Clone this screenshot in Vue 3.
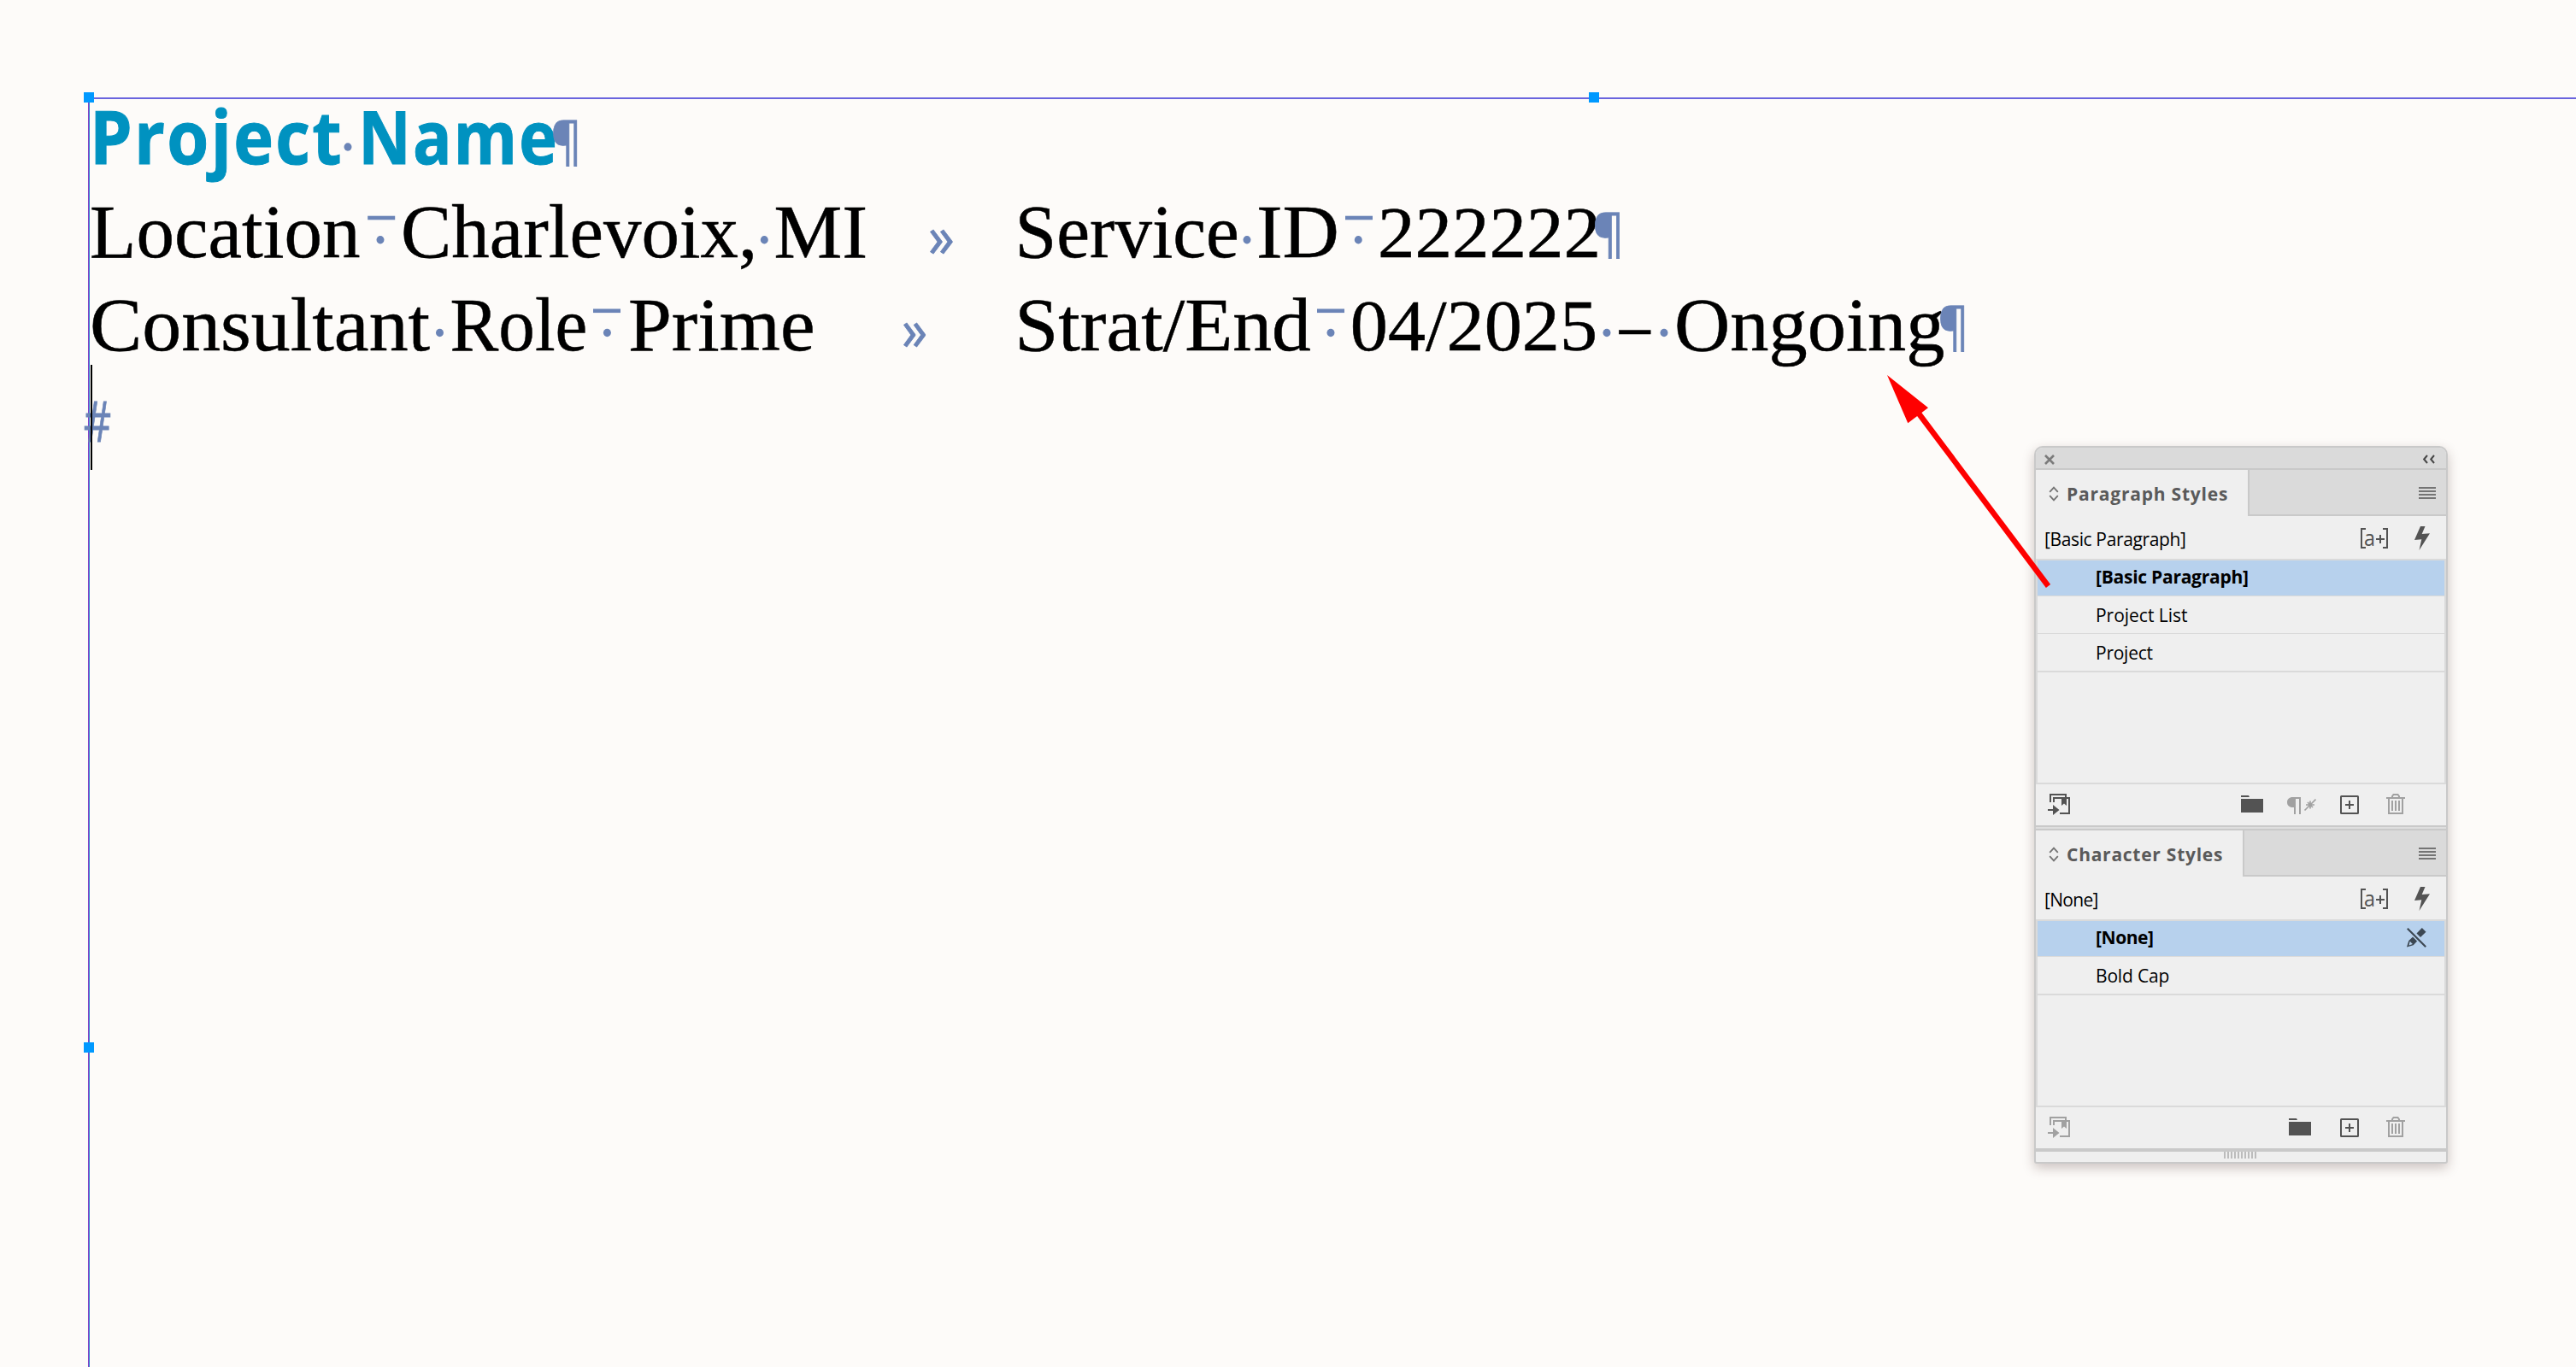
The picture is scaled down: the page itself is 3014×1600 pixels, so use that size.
<template>
  <div class="workspace">
    <!-- text frame -->
    <div class="text-frame">
      <svg
        v-for="(line, index) in lines"
        :key="index"
        class="text-line"
        width="2909"
        height="108.5"
        viewBox="105 0 2909 108.5"
      >
        <text
          v-for="word in line.words"
          :key="word.x"
          :class="word.kind"
          :transform="place(word, line.base)"
          :style="{ fontSize: word.size + 'px', letterSpacing: word.gap + 'px' }"
        >{{ word.text }}</text>
        <ellipse
          v-for="x in line.dots"
          :key="'d' + x"
          class="mark-shape"
          :cx="x"
          :cy="line.base - 20"
          rx="4.5"
          ry="4.7"
        />
        <rect
          v-for="x in line.bars"
          :key="'b' + x"
          class="mark-shape"
          :x="x"
          :y="line.base - 48"
          width="32"
          height="4.6"
        />
      </svg>
      <span class="caret"></span>
      <span class="handle handle-corner"></span>
      <span class="handle handle-top"></span>
      <span class="handle handle-left"></span>
    </div>

    <!-- floating styles panel -->
    <div class="panel">
      <div class="panel-bar">
        <svg width="12" height="12" viewBox="0 0 12 12">
          <path d="M1 1l10 10M11 1L1 11" fill="none" stroke="#7b7b7b" stroke-width="2.6" />
        </svg>
        <svg width="14" height="12" viewBox="0 0 14 12">
          <path d="M5 1L1.2 5.5 5 10M13 1L9.2 5.5 13 10" fill="none" stroke="#484848" stroke-width="2" />
        </svg>
      </div>

      <div v-for="group in groups" :key="group.title" class="group">
        <div class="tabs">
          <div class="tab" :style="{ width: group.tabWidth + 'px' }">
            <svg width="12" height="18" viewBox="0 0 12 18">
              <path d="M1.2 6.8L6 1.6l4.8 5.2M1.2 11.2L6 16.4l4.8-5.2" fill="none" stroke="#747474" stroke-width="1.8" />
            </svg>
            <span class="tab-title" :style="tracking(group.title, true, group.titleWidth)">{{ group.title }}</span>
          </div>
          <div class="tab-rest">
            <svg width="20" height="14" viewBox="0 0 20 14">
              <path d="M0 1h20M0 5h20M0 9h20M0 13h20" stroke="#747474" stroke-width="2" />
            </svg>
          </div>
        </div>

        <div class="current">
          <span class="current-name" :style="tracking(group.current, false, group.currentWidth)">{{ group.current }}</span>
          <svg class="override" width="32" height="24" viewBox="0 0 32 24">
            <path d="M6 1H1v22h5M26 1h5v22h-5" fill="none" stroke="#535353" stroke-width="2" />
            <path d="M18 13h10M23 8v10" stroke="#535353" stroke-width="2" />
            <text x="4" y="20.5" textLength="13" lengthAdjust="spacingAndGlyphs">a</text>
          </svg>
          <svg width="18" height="28" viewBox="0 0 18 28">
            <path d="M7 0h5.500L8.700 9 18 8.300 5.500 28 8.300 15.300 0 16z" fill="#535353" />
          </svg>
        </div>

        <div class="list">
          <div
            v-for="row in group.rows"
            :key="row.name"
            class="row"
            :class="{ selected: row.selected }"
          >
            <span class="row-name" :style="tracking(row.name, row.selected, row.width)">{{ row.name }}</span>
            <svg v-if="row.locked" width="23" height="23" viewBox="0 0 23 23" fill="#3d4853">
              <path d="M11.500 6.500L17.800 0 22.500 4.700 16 11z" />
              <path d="M7.400 10.200l5 5-4.700 5L0 22.500 2.300 15z" />
              <path d="M3.700 15.800l3.200 3.200-4.400 1.400z" fill="#b7d1ed" />
              <path d="M.8.800l21.400 21.400" stroke="#b7d1ed" stroke-width="5" />
              <path d="M.8.800l21.400 21.400" stroke="#3d4853" stroke-width="2.200" />
            </svg>
          </div>
        </div>

        <div class="footer">
          <svg class="load" :class="{ dim: group.loadDim }" width="26" height="26" viewBox="0 0 26 26">
            <path d="M3 10V1h18v4M7 10V5h18v18H14" fill="none" stroke="currentColor" stroke-width="2" />
            <path d="M16 5h6v9l-3-2.500-3 2.500z" fill="currentColor" />
            <path d="M0 18h6v-5l7.500 6L6 25v-5H0z" fill="currentColor" />
          </svg>
          <svg class="folder" width="26" height="26" viewBox="0 0 26 26">
            <path d="M0 2h9l1 2H0zM0 6h26v16H0z" fill="currentColor" />
          </svg>
          <svg v-if="group.clear" class="clear dim" width="34" height="26" viewBox="0 0 34 26">
            <path d="M16 4v20h-2V6h-4v18H8v-8H6.500C2.500 16 0 13.500 0 10s2.500-6 6.500-6z" fill="currentColor" />
            <path d="M20.500 19.500L33.500 6.500M22 13h10M27 8.500v9M24 10l6 6" stroke="currentColor" stroke-width="1.700" />
          </svg>
          <svg class="create" width="22" height="26" viewBox="0 0 22 26">
            <rect x="1" y="3" width="20" height="20" rx="0.500" fill="none" stroke="currentColor" stroke-width="2" />
            <path d="M6 13h10M11 8v10" stroke="currentColor" stroke-width="2" />
          </svg>
          <svg class="dim" width="22" height="26" viewBox="0 0 22 26">
            <path d="M7 4.500V3l1.500-2h5L15 3v1.500M0 5h22M3 5v18h16V5M7 8v12M11 8v12M15 8v12" fill="none" stroke="currentColor" stroke-width="2" />
          </svg>
        </div>
      </div>

      <div class="grip">
        <span v-for="n in 10" :key="n" class="grip-bar"></span>
      </div>
    </div>

    <!-- annotation arrow -->
    <svg class="arrow" width="200" height="260" viewBox="2200 432 200 260">
      <path d="M2245 484L2396.500 686" stroke="#fe0000" stroke-width="6.600" />
      <path d="M2208 439l48 38.300-23.700 18z" fill="#fe0000" />
    </svg>
  </div>
</template>

<script setup>
const SERIF = '"Liberation Serif", serif'
const SANS = '"Open Sans", sans-serif'
const ctx = document.createElement('canvas').getContext('2d')

// x and w are the left edge and the width of the drawn letters
const body = (text, x, w, size = 89) => ({ text, x, w, size, gap: 0, kind: 'body' })
const title = (text, x, w) => ({ text, x, w, size: 86, gap: 2.5, kind: 'title' })
const mark = (text, x, w, size, drop = 0) => ({ text, x, w, size, drop, gap: 0, kind: 'mark' })

const lines = [
  {
    base: 76,
    words: [title('Project', 111.5, 286), title('Name', 425.5, 224), mark('¶', 647, 28, 60, -5.5)],
    dots: [407],
    bars: []
  },
  {
    base: 75.7,
    words: [
      body('Location', 107, 314),
      body('Charlevoix,', 472, 409),
      body('MI', 907.5, 105),
      mark('»', 1088, 27, 68),
      body('Service', 1192.5, 255),
      body('ID', 1473, 90.5),
      body('222222', 1615, 254, 84),
      mark('¶', 1866, 29, 60, -5.5)
    ],
    dots: [445, 894.3, 1459, 1589.3],
    bars: [430.2, 1574]
  },
  {
    base: 76.5,
    words: [
      body('Consultant', 108, 395.5),
      body('Role', 528.5, 156.5),
      body('Prime', 737, 214),
      mark('»', 1057, 26.5, 68),
      body('Strat/End', 1192.5, 341),
      body('04/2025', 1583, 283, 84),
      body('–', 1894, 38),
      body('Ongoing', 1962, 312),
      mark('¶', 2270, 28, 60, -5.5)
    ],
    dots: [514.5, 710.4, 1557, 1880, 1947],
    bars: [694, 1541]
  },
  {
    base: 74.5,
    words: [mark('#', 98.6, 30.5, 66)],
    dots: [],
    bars: []
  }
]

const groups = [
  {
    title: 'Paragraph Styles',
    titleWidth: 187,
    tabWidth: 250,
    current: '[Basic Paragraph]',
    currentWidth: 164,
    clear: true,
    rows: [
      { name: '[Basic Paragraph]', width: 177, selected: true },
      { name: 'Project List', width: 105 },
      { name: 'Project', width: 64.5 }
    ]
  },
  {
    title: 'Character Styles',
    titleWidth: 181,
    tabWidth: 244,
    current: '[None]',
    currentWidth: 61.5,
    loadDim: true,
    rows: [
      { name: '[None]', width: 66, selected: true, locked: true },
      { name: 'Bold Cap', width: 83.5 }
    ]
  }
]

const weights = { title: 700, body: 400, mark: 400 }

const ink = (text, font, gap) => {
  ctx.font = font
  ctx.letterSpacing = `${gap}px`
  const m = ctx.measureText(text)
  return { left: m.actualBoundingBoxLeft, width: m.actualBoundingBoxLeft + m.actualBoundingBoxRight }
}

// stretch a word so that its letters fill the given width
const place = (word, base) => {
  const family = word.kind === 'body' ? SERIF : SANS
  const box = ink(word.text, `${weights[word.kind]} ${word.size}px ${family}`, word.gap)
  const scale = word.w / box.width
  return `matrix(${scale} 0 0 1 ${word.x + box.left * scale} ${base + (word.drop || 0)})`
}

// letter spacing that brings a panel label to its width
const tracking = (text, bold, width) => {
  const box = ink(text, `${bold ? 700 : 400} 21px ${SANS}`, 0)
  return { letterSpacing: `${(width - box.width) / (text.length - 1)}px` }
}
</script>

<style>
body {
  background: #fdfbf9;
  overflow: hidden;
}
</style>

<style scoped>
.workspace {
  position: relative;
  width: 3014px;
  height: 1600px;
  padding: 114px 0 0 103px;
  box-sizing: border-box;
  overflow: hidden;
  background: #fdfbf9;
  font-family: "Open Sans", sans-serif;
}

/* text frame */
.text-frame {
  position: relative;
  height: 1486px;
  box-sizing: border-box;
  border-top: 2px solid #6a64de;
  border-left: 1px solid #8440c8;
  box-shadow: inset 1px 0 0 #2f86cf;
  padding-left: 1px;
}

.text-line {
  display: block;
  overflow: visible;
}

.body {
  font-family: "Liberation Serif", serif;
  fill: #000;
  stroke: #000;
  stroke-width: 0.5px;
}

.title {
  font-family: "Open Sans", sans-serif;
  font-weight: 700;
  fill: #0092c0;
  stroke: #0092c0;
  stroke-width: 1px;
}

.mark {
  font-family: "Open Sans", sans-serif;
  fill: #6b84b7;
  stroke: #6b84b7;
  stroke-width: 0.8px;
}

.mark-shape {
  fill: #6b84b7;
}

.caret {
  position: absolute;
  left: 2px;
  top: 311px;
  width: 2px;
  height: 123px;
  background: #000;
}

.handle {
  position: absolute;
  width: 12px;
  height: 12px;
  background: #0099ff;
}

.handle-corner {
  left: -6px;
  top: -8px;
}

.handle-top {
  left: 1755px;
  top: -8px;
}

.handle-left {
  left: -6px;
  top: 1104px;
}

/* panel */
.panel {
  position: absolute;
  left: 2380px;
  top: 522px;
  width: 484px;
  box-sizing: border-box;
  border: 2px solid #c9c9c9;
  border-radius: 10px 10px 3px 3px;
  background: #efefef;
  box-shadow: 0 5px 14px rgba(60, 35, 30, 0.26);
}

.panel-bar {
  display: flex;
  justify-content: space-between;
  align-items: flex-start;
  height: 26px;
  box-sizing: border-box;
  padding: 8px 13px 0 10px;
  border-bottom: 2px solid #c9c9c9;
  border-radius: 8px 8px 0 0;
  background: #dadada;
}

.group + .group {
  border-top: 2px solid #c9c9c9;
}

.group:nth-child(2) .footer {
  height: 50px;
  border-bottom: 2px solid #c9c9c9;
  margin-bottom: 2px;
  box-shadow: 0 2px 0 #dedede;
}

.tabs {
  display: flex;
  height: 54px;
}

.tab {
  display: flex;
  align-items: center;
  gap: 9px;
  box-sizing: border-box;
  padding: 2px 0 0 15px;
  border-right: 2px solid #c9c9c9;
}

.tab-title {
  font-size: 21px;
  font-weight: 700;
  color: #5a5a5a;
  white-space: nowrap;
}

.tab-rest {
  flex: 1;
  display: flex;
  justify-content: flex-end;
  padding: 20px 12px 0 0;
  border-bottom: 2px solid #c9c9c9;
  background: #dadada;
}

.current {
  display: flex;
  align-items: center;
  height: 50px;
  box-sizing: border-box;
  padding: 2px 19px 0 10px;
}

.current-name {
  flex: 1;
  padding-top: 1px;
  font-size: 21px;
  white-space: nowrap;
}

.override {
  margin-right: 31px;
  overflow: visible;
}

.override text {
  font-size: 26px;
  fill: #535353;
}

.list {
  height: 264px;
  box-sizing: border-box;
  border: 2px solid #dadada;
}

.group:nth-child(3) .list {
  height: 220px;
}

.row {
  display: flex;
  align-items: center;
  justify-content: space-between;
  height: 44px;
  box-sizing: border-box;
  padding: 0 21px 0 68px;
  border-bottom: 1px solid #dadada;
  font-size: 21px;
}

.row:last-child {
  height: 45px;
  border-bottom-width: 2px;
}

.row.selected {
  height: 42px;
  padding-bottom: 3px;
  background: #b7d1ed;
  font-weight: 700;
}

.footer {
  display: flex;
  height: 48px;
  box-sizing: border-box;
  padding: 11px 48px 0 14px;
  color: #535353;
}

.load {
  margin-right: auto;
}

.folder {
  margin-right: 28px;
}

.group:nth-child(3) .folder {
  margin-right: 34px;
}

.clear {
  margin-right: 28px;
}

.create {
  margin-right: 32px;
}

.dim {
  color: #a1a1a1;
}

.grip {
  display: flex;
  justify-content: center;
  gap: 2px;
  height: 16px;
  box-sizing: border-box;
  border-top: 4px solid #c9c9c9;
  padding-right: 2px;
}

.grip-bar {
  width: 2px;
  height: 8px;
  background: #bcbcbc;
}

/* arrow */
.arrow {
  position: absolute;
  left: 2200px;
  top: 432px;
}
</style>
